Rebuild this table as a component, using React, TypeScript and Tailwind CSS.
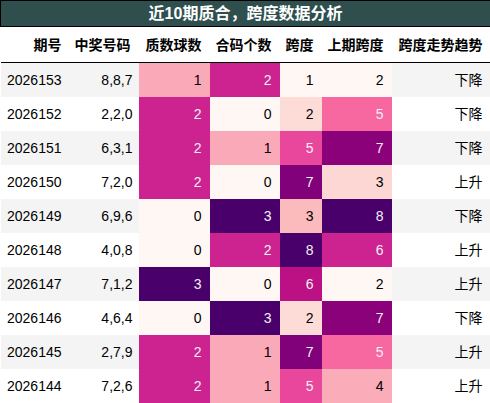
const rows = [
  { id: "2026153", nums: "8,8,7", prime: 1, comp: 2, span: 1, prev: 2, trend: "下降" },
  { id: "2026152", nums: "2,2,0", prime: 2, comp: 0, span: 2, prev: 5, trend: "下降" },
  { id: "2026151", nums: "6,3,1", prime: 2, comp: 1, span: 5, prev: 7, trend: "下降" },
  { id: "2026150", nums: "7,2,0", prime: 2, comp: 0, span: 7, prev: 3, trend: "上升" },
  { id: "2026149", nums: "6,9,6", prime: 0, comp: 3, span: 3, prev: 8, trend: "下降" },
  { id: "2026148", nums: "4,0,8", prime: 0, comp: 2, span: 8, prev: 6, trend: "上升" },
  { id: "2026147", nums: "7,1,2", prime: 3, comp: 0, span: 6, prev: 2, trend: "上升" },
  { id: "2026146", nums: "4,6,4", prime: 0, comp: 3, span: 2, prev: 7, trend: "下降" },
  { id: "2026145", nums: "2,7,9", prime: 2, comp: 1, span: 7, prev: 5, trend: "上升" },
  { id: "2026144", nums: "7,2,6", prime: 2, comp: 1, span: 5, prev: 4, trend: "上升" },
];

// RdPu gradient, normalised per column
const countHeat: Record<number, string> = {
  0: "bg-[#fff7f3] text-black",
  1: "bg-[#faa9b8] text-black",
  2: "bg-[#cd2391] text-[#f1f1f1]",
  3: "bg-[#49006a] text-[#f1f1f1]",
};

const spanHeat: Record<number, string> = {
  1: "bg-[#fff7f3] text-black",
  2: "bg-[#fddcd8] text-black",
  3: "bg-[#fbbabc] text-black",
  5: "bg-[#e8479c] text-[#f1f1f1]",
  6: "bg-[#bc1185] text-[#f1f1f1]",
  7: "bg-[#81017a] text-[#f1f1f1]",
  8: "bg-[#49006a] text-[#f1f1f1]",
};

const prevHeat: Record<number, string> = {
  2: "bg-[#fff7f3] text-black",
  3: "bg-[#fdd7d4] text-black",
  4: "bg-[#faacb9] text-black",
  5: "bg-[#f768a1] text-[#f1f1f1]",
  6: "bg-[#cd2391] text-[#f1f1f1]",
  7: "bg-[#8b0179] text-[#f1f1f1]",
  8: "bg-[#49006a] text-[#f1f1f1]",
};

const headers = ["期号", "中奖号码", "质数球数", "合码个数", "跨度", "上期跨度", "跨度走势趋势"];

export default function App() {
  return (
    <div className="w-[490px] h-[403px] bg-white font-['Liberation_Sans','Noto_Sans_CJK_SC',sans-serif] text-sm text-black">
      <table className="table-fixed border-collapse w-[490px]">
        <colgroup>
          <col className="w-[69px]" />
          <col className="w-[69px]" />
          <col className="w-[71px]" />
          <col className="w-[70px]" />
          <col className="w-[42px]" />
          <col className="w-[70px]" />
          <col className="w-[99px]" />
        </colgroup>
        <thead>
          <tr>
            <th colSpan={7} className="h-[26px] p-0 border border-black bg-[#2f4f4f] text-white text-base font-bold text-center leading-6">
              近10期质合，跨度数据分析
            </th>
          </tr>
          <tr className="border-b border-black">
            {headers.map((h) => (
              <th key={h} className="h-[36px] p-0 pr-2 text-right font-bold whitespace-nowrap">
                {h}
              </th>
            ))}
          </tr>
        </thead>
        <tbody>
          {rows.map((r, i) => {
            const plain = i % 2 === 0 ? "bg-[#f4f4f4]" : "bg-white";
            return (
              <tr key={r.id} className="h-[34px]">
                <td className={`p-0 pr-2 text-right ${plain}`}>{r.id}</td>
                <td className={`p-0 pr-1.5 text-right ${plain}`}>{r.nums}</td>
                <td className={`p-0 pr-2 text-right ${countHeat[r.prime]}`}>{r.prime}</td>
                <td className={`p-0 pr-2 text-right ${countHeat[r.comp]}`}>{r.comp}</td>
                <td className={`p-0 pr-2 text-right ${spanHeat[r.span]}`}>{r.span}</td>
                <td className={`p-0 pr-2 text-right ${prevHeat[r.prev]}`}>{r.prev}</td>
                <td className={`p-0 pr-2 text-right ${plain}`}>{r.trend}</td>
              </tr>
            );
          })}
        </tbody>
      </table>
    </div>
  );
}
